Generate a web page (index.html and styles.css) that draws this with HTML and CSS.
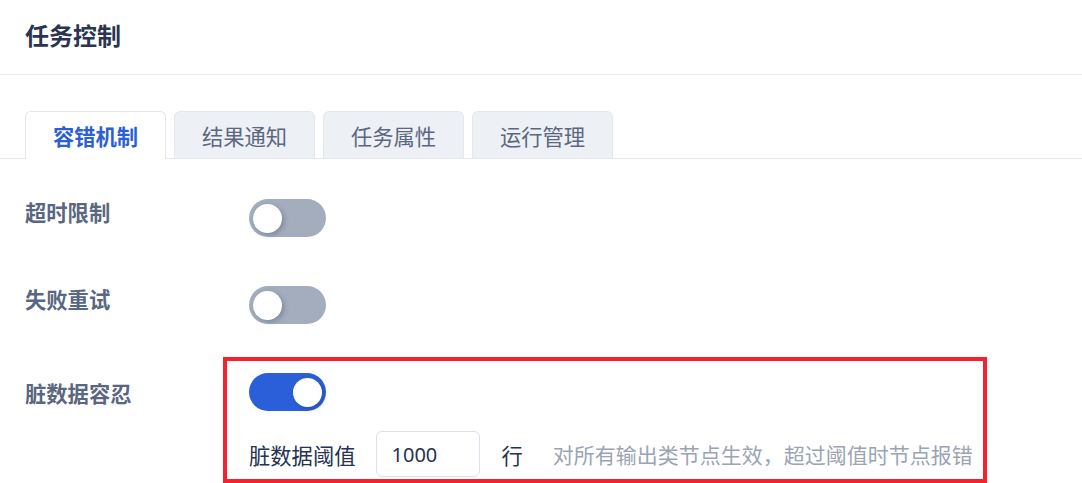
FILE: index.html
```html
<!DOCTYPE html>
<html lang="zh-CN">
<head>
<meta charset="utf-8">
<title>任务控制</title>
<link rel="stylesheet" href="styles.css">
</head>
<body>
<div class="page">
  <header class="header"><h1 class="title">任务控制</h1></header>
  <div class="tabs">
    <div class="tab active">容错机制</div>
    <div class="tab">结果通知</div>
    <div class="tab">任务属性</div>
    <div class="tab">运行管理</div>
  </div>
  <div class="form">
    <div class="row row1">
      <div class="label">超时限制</div>
      <div class="control"><span class="switch"><span class="knob"></span></span></div>
    </div>
    <div class="row row2">
      <div class="label">失败重试</div>
      <div class="control"><span class="switch"><span class="knob"></span></span></div>
    </div>
    <div class="row row3">
      <div class="label label3">脏数据容忍</div>
      <div class="control">
        <span class="switch on"><span class="knob"></span></span>
        <div class="threshold">
          <span class="th-label">脏数据阈值</span>
          <span class="input">1000</span>
          <span class="unit">行</span>
          <span class="hint">对所有输出类节点生效，超过阈值时节点报错</span>
        </div>
      </div>
    </div>
  </div>
  <div class="highlight"></div>
</div>
</body>
</html>
```

FILE: styles.css
```css
html, body {
  margin: 0;
  padding: 0;
  background: #ffffff;
}
body {
  font-family: "Noto Sans CJK SC", "Noto Sans", sans-serif;
  color: #253252;
}
.page {
  position: relative;
  width: 1082px;
  height: 483px;
  overflow: hidden;
}
.header {
  height: 75px;
  border-bottom: 1px solid #e8eaf0;
  display: flex;
  align-items: center;
  padding-left: 25px;
  box-sizing: border-box;
}
.title {
  margin: 0;
  font-size: 24px;
  font-weight: 700;
  color: #2a3550;
  line-height: 1;
  position: relative;
  top: -2px;
}
.tabs {
  margin-top: 36px;
  padding-left: 25px;
  display: flex;
  gap: 8px;
  border-bottom: 1px solid #e4e7ee;
  height: 47px;
}
.tab {
  width: 141px;
  height: 47px;
  box-sizing: border-box;
  border: 1px solid #e4e7ee;
  border-bottom: none;
  border-radius: 6px 6px 0 0;
  background: #edf0f5;
  color: #5b6780;
  font-size: 21.3px;
  display: flex;
  align-items: center;
  justify-content: center;
}
.tab.active {
  background: #ffffff;
  color: #2b5fd9;
  font-weight: 700;
  height: 48px;
}
.form {
  padding-left: 25px;
}
.row {
  display: flex;
}
.row1 { margin-top: 40px; }
.row2 { margin-top: 49px; }
.row3 { margin-top: 49px; }
.label {
  width: 224px;
  font-size: 21.3px;
  font-weight: 700;
  color: #5a6782;
  line-height: 26px;
}
.label3 {
  margin-top: 7px;
}
.control {
  display: flex;
  flex-direction: column;
}
.switch {
  display: block;
  width: 77px;
  height: 38px;
  border-radius: 19px;
  background: #a3adbd;
  position: relative;
}
.switch .knob {
  position: absolute;
  left: 4px;
  top: 4.5px;
  width: 29px;
  height: 29px;
  border-radius: 50%;
  background: #ffffff;
  box-shadow: 2px 2px 5px rgba(40, 50, 80, 0.3);
}
.switch.on {
  background: #2b5fd9;
}
.switch.on .knob {
  left: 44px;
}
.threshold {
  margin-top: 20px;
  display: flex;
  align-items: center;
  font-size: 21.3px;
}
.th-label {
  color: #253252;
}
.input {
  margin-left: 20px;
  width: 104px;
  height: 46px;
  box-sizing: border-box;
  border: 1px solid #dcdfe8;
  border-radius: 6px;
  padding-left: 15px;
  display: flex;
  align-items: center;
  font-family: "Noto Sans", sans-serif;
  font-size: 20px;
  color: #253252;
}
.unit {
  margin-left: 22px;
  color: #253252;
}
.hint {
  margin-left: 30px;
  font-size: 21px;
  color: #9ba4b5;
}
.highlight {
  position: absolute;
  left: 223px;
  top: 357px;
  width: 764px;
  height: 126px;
  box-sizing: border-box;
  border: 4px solid #f5222d;
  pointer-events: none;
}
```
